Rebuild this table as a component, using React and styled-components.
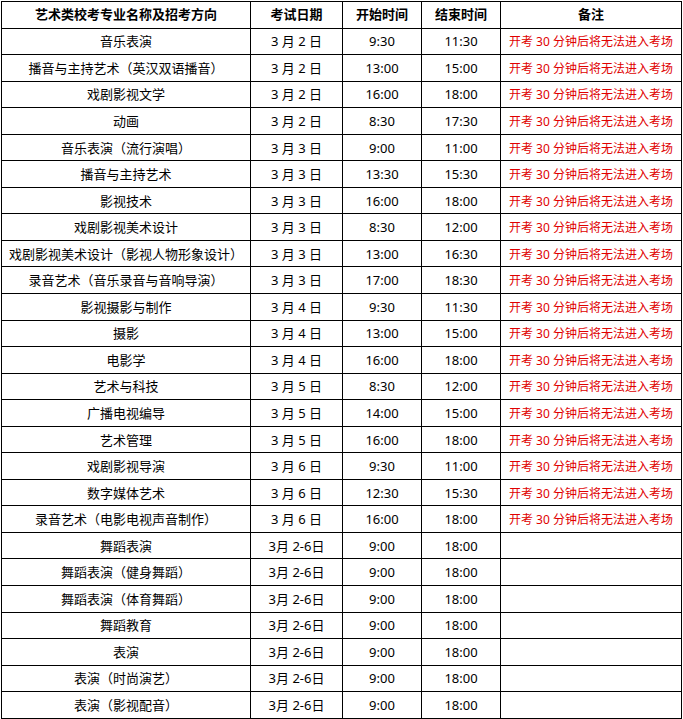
import React from "react";
import styled, { createGlobalStyle } from "styled-components";

const GlobalStyle = createGlobalStyle`
  html, body {
    margin: 0;
    padding: 0;
    background: #ffffff;
  }
  body {
    font-family: "Microsoft YaHei", "Noto Sans", "Noto Sans CJK SC", sans-serif;
    color: #000;
  }
`;

const Table = styled.table`
  margin: 1px 0 0 1px;
  width: 681px;
  border-collapse: collapse;
  table-layout: fixed;
  font-size: 13px;
`;

const Row = styled.tr`
  height: 26.55px;
`;

const HeadCell = styled.th`
  border: 1px solid #000;
  padding: 0;
  font-weight: 700;
  text-align: center;
  vertical-align: middle;
  white-space: nowrap;
  line-height: 17px;
`;

const Cell = styled.td`
  border: 1px solid #000;
  padding: 1px 0 0;
  text-align: center;
  vertical-align: middle;
  white-space: nowrap;
  line-height: 17px;
  color: ${(p) => (p.$note ? "#e00000" : "#000")};
  font-size: ${(p) => (p.$note ? "12px" : "13px")};
`;

const NOTE = "开考 30 分钟后将无法进入考场";

const rows = [
  ["音乐表演", "3 月 2 日", "9:30", "11:30", NOTE],
  ["播音与主持艺术（英汉双语播音）", "3 月 2 日", "13:00", "15:00", NOTE],
  ["戏剧影视文学", "3 月 2 日", "16:00", "18:00", NOTE],
  ["动画", "3 月 2 日", "8:30", "17:30", NOTE],
  ["音乐表演（流行演唱）", "3 月 3 日", "9:00", "11:00", NOTE],
  ["播音与主持艺术", "3 月 3 日", "13:30", "15:30", NOTE],
  ["影视技术", "3 月 3 日", "16:00", "18:00", NOTE],
  ["戏剧影视美术设计", "3 月 3 日", "8:30", "12:00", NOTE],
  ["戏剧影视美术设计（影视人物形象设计）", "3 月 3 日", "13:00", "16:30", NOTE],
  ["录音艺术（音乐录音与音响导演）", "3 月 3 日", "17:00", "18:30", NOTE],
  ["影视摄影与制作", "3 月 4 日", "9:30", "11:30", NOTE],
  ["摄影", "3 月 4 日", "13:00", "15:00", NOTE],
  ["电影学", "3 月 4 日", "16:00", "18:00", NOTE],
  ["艺术与科技", "3 月 5 日", "8:30", "12:00", NOTE],
  ["广播电视编导", "3 月 5 日", "14:00", "15:00", NOTE],
  ["艺术管理", "3 月 5 日", "16:00", "18:00", NOTE],
  ["戏剧影视导演", "3 月 6 日", "9:30", "11:00", NOTE],
  ["数字媒体艺术", "3 月 6 日", "12:30", "15:30", NOTE],
  ["录音艺术（电影电视声音制作）", "3 月 6 日", "16:00", "18:00", NOTE],
  ["舞蹈表演", "3月 2-6日", "9:00", "18:00", ""],
  ["舞蹈表演（健身舞蹈）", "3月 2-6日", "9:00", "18:00", ""],
  ["舞蹈表演（体育舞蹈）", "3月 2-6日", "9:00", "18:00", ""],
  ["舞蹈教育", "3月 2-6日", "9:00", "18:00", ""],
  ["表演", "3月 2-6日", "9:00", "18:00", ""],
  ["表演（时尚演艺）", "3月 2-6日", "9:00", "18:00", ""],
  ["表演（影视配音）", "3月 2-6日", "9:00", "18:00", ""],
];

export default function App() {
  return (
    <>
      <GlobalStyle />
      <Table>
        <colgroup>
          <col style={{ width: 249 }} />
          <col style={{ width: 92 }} />
          <col style={{ width: 79 }} />
          <col style={{ width: 79 }} />
          <col style={{ width: 181 }} />
        </colgroup>
        <thead>
          <Row>
            <HeadCell>艺术类校考专业名称及招考方向</HeadCell>
            <HeadCell>考试日期</HeadCell>
            <HeadCell>开始时间</HeadCell>
            <HeadCell>结束时间</HeadCell>
            <HeadCell>备注</HeadCell>
          </Row>
        </thead>
        <tbody>
          {rows.map((r, i) => (
            <Row key={i}>
              <Cell>{r[0]}</Cell>
              <Cell>{r[1]}</Cell>
              <Cell>{r[2]}</Cell>
              <Cell>{r[3]}</Cell>
              <Cell $note>{r[4]}</Cell>
            </Row>
          ))}
        </tbody>
      </Table>
    </>
  );
}
